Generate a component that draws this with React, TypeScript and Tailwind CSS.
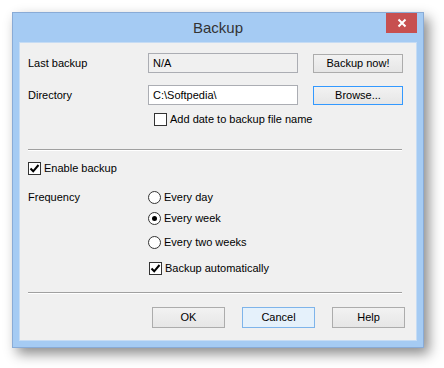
import React from 'react';

const font = { fontFamily: '"Liberation Sans", Arial, sans-serif' };

function Checkbox({ checked }: { checked?: boolean }) {
  return (
    <span className="w-[13px] h-[13px] border border-[#333] bg-white flex items-center justify-center shrink-0">
      {checked && (
        <svg width="11" height="11" viewBox="0 0 11 11">
          <path d="M1.5 5.5 L4.2 8.3 L9.5 2" fill="none" stroke="#000" strokeWidth="2" />
        </svg>
      )}
    </span>
  );
}

function Radio({ checked }: { checked?: boolean }) {
  return (
    <span className="w-[13px] h-[13px] rounded-full border border-[#333] bg-white flex items-center justify-center shrink-0">
      {checked && <span className="w-[5px] h-[5px] rounded-full bg-black" />}
    </span>
  );
}

function Button({ label, focus, hot }: { label: string; focus?: boolean; hot?: boolean }) {
  const cls = hot
    ? 'border-[#7eb4ea] bg-[#e5f1fb]'
    : focus
    ? 'border-[#3399ff] bg-gradient-to-b from-[#f2f2f2] to-[#e6e6e6]'
    : 'border-[#acacac] bg-gradient-to-b from-[#f2f2f2] to-[#e6e6e6]';
  return (
    <div className={`w-[90px] h-[19px] border ${cls} flex items-center justify-center text-[11px] text-black`}>
      {label}
    </div>
  );
}

function Separator() {
  return <div className="w-[374px] h-px bg-[#a0a0a0] border-b border-white box-content" />;
}

export default function App() {
  return (
    <div className="w-[444px] h-[368px] bg-white pt-[12px] pl-[12px]" style={font}>
      <div className="w-[412px] h-[336px] bg-[#a5cbf3] border border-[#89abd6] shadow-[5px_6px_12px_rgba(0,0,0,0.45)] flex flex-col">
        <div className="h-[29px] flex items-start relative">
          <div className="flex-1 text-center text-[15px] text-[#333] leading-[29px]">Backup</div>
          <div className="absolute right-[6px] top-0 w-[31px] h-[20px] bg-[#c75050] flex items-center justify-center">
            <svg width="10" height="10" viewBox="0 0 10 10">
              <path d="M1.5 1.5 L8.5 8.5 M8.5 1.5 L1.5 8.5" stroke="#fff" strokeWidth="2" />
            </svg>
          </div>
        </div>
        <div className="mx-[6px] h-[299px] border border-[#c6dcf4] bg-[#f0f0f0] pl-[8px] text-[11px] text-black">
          <div className="mt-[10px] flex items-center h-[20px]">
            <div className="w-[120px]">Last backup</div>
            <div className="w-[150px] h-[20px] border border-[#abadb3] bg-[#f0f0f0] flex items-center pl-[4px]">N/A</div>
            <div className="ml-[15px]">
              <Button label="Backup now!" />
            </div>
          </div>
          <div className="mt-[12px] flex items-center h-[20px]">
            <div className="w-[120px]">Directory</div>
            <div className="w-[150px] h-[20px] border border-[#abadb3] bg-white flex items-center pl-[4px]">C:\Softpedia\</div>
            <div className="ml-[15px]">
              <Button label="Browse..." focus />
            </div>
          </div>
          <div className="mt-[7px] ml-[126px] flex items-center gap-[3px] h-[15px]">
            <Checkbox />
            <span>Add date to backup file name</span>
          </div>
          <div className="mt-[22px]">
            <Separator />
          </div>
          <div className="mt-[10px] flex items-center gap-[3px] h-[15px]">
            <Checkbox checked />
            <span>Enable backup</span>
          </div>
          <div className="mt-[13px] flex">
            <div className="w-[120px] h-[16px] flex items-center">Frequency</div>
            <div className="flex flex-col">
              <div className="h-[16px] flex items-center gap-[3px]">
                <Radio />
                <span>Every day</span>
              </div>
              <div className="mt-[5px] h-[16px] flex items-center gap-[3px]">
                <Radio checked />
                <span>Every week</span>
              </div>
              <div className="mt-[8px] h-[16px] flex items-center gap-[3px]">
                <Radio />
                <span>Every two weeks</span>
              </div>
              <div className="mt-[10px] h-[16px] flex items-center gap-[3px] ml-[1px]">
                <Checkbox checked />
                <span>Backup automatically</span>
              </div>
            </div>
          </div>
          <div className="mt-[16px]">
            <Separator />
          </div>
          <div className="mt-[13px] flex justify-end pr-[11px] gap-[17px]">
            <div className="w-[73px] [&>div]:w-[73px] [&>div]:h-[21px]">
              <Button label="OK" />
            </div>
            <div className="w-[73px] [&>div]:w-[73px] [&>div]:h-[21px]">
              <Button label="Cancel" hot />
            </div>
            <div className="w-[73px] [&>div]:w-[73px] [&>div]:h-[21px]">
              <Button label="Help" />
            </div>
          </div>
        </div>
      </div>
    </div>
  );
}
